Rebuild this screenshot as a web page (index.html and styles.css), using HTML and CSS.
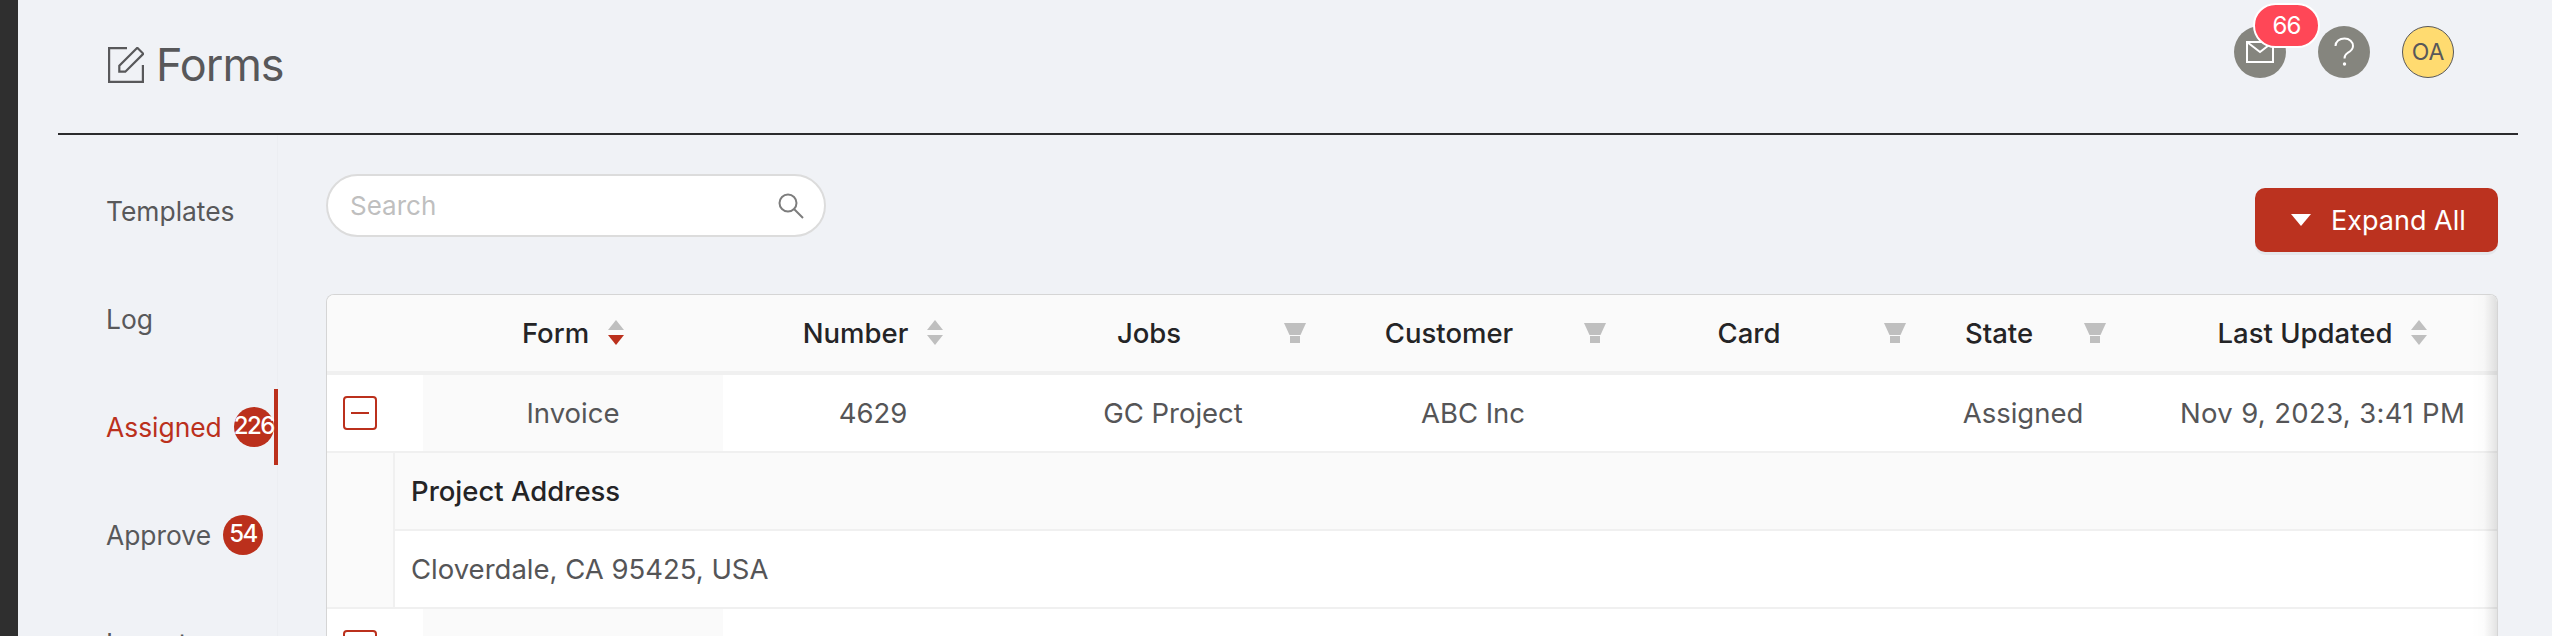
FILE: index.html
```html
<!DOCTYPE html>
<html lang="en">
<head>
<meta charset="utf-8">
<title>Forms</title>
<link rel="stylesheet" href="styles.css">
</head>
<body>
<div class="app">
  <div class="rail"></div>
  <div class="main">
    <header class="topbar">
      <h1 class="title">
        <svg class="title-icon" viewBox="0 0 36 36" width="36" height="36" fill="none" stroke="#58585a" stroke-width="2.2"><path d="M19 1.100H1.100V34.900H34.900V18"/><path d="M11.300 24.700V18.700L29.300 .8L35.300 6.800L17.300 24.700Z"/></svg>
        <span>Forms</span>
      </h1>
      <div class="tools">
        <div class="tool">
          <svg viewBox="0 0 52 52" width="52" height="52" fill="none" stroke="#fff" stroke-width="2"><rect x="13" y="16" width="26" height="20"/><path d="M13 16L26 26L39 16"/></svg>
          <span class="mail-count">66</span>
        </div>
        <div class="tool">
          <svg viewBox="0 0 52 52" width="52" height="52" fill="none" stroke="#fff" stroke-width="2"><path d="M17.500 20C17.500 15.500 21.500 12.500 26.500 12.500C31.500 12.500 35 15.800 35 20C35 24 32 25.600 29.500 27C27.500 28.200 26.500 29.500 26.500 32.500"/><circle cx="26.500" cy="38" r="1.700" fill="#fff" stroke="none"/></svg>
        </div>
        <div class="avatar">OA</div>
      </div>
    </header>
    <div class="body">
      <nav class="nav">
        <a class="nav-item">Templates</a>
        <a class="nav-item">Log</a>
        <a class="nav-item nav-item-active">Assigned <span class="count">226</span></a>
        <a class="nav-item">Approve <span class="count">54</span></a>
        <a class="nav-item">Import</a>
      </nav>
      <section class="content">
        <div class="toolbar">
          <label class="search">
            <input class="search-input" type="text" placeholder="Search">
            <svg viewBox="0 0 26 26" width="26" height="26" fill="none" stroke="#7d7d7d" stroke-width="2"><circle cx="10" cy="10" r="8.500"/><path d="M16 16L25 25"/></svg>
          </label>
          <button class="expand-all"><span class="caret"></span>Expand All</button>
        </div>
        <div class="table">
          <div class="row row-head">
            <div class="cell"></div>
            <div class="cell cell-sorted"><span>Form</span><svg class="sort" viewBox="0 0 16 25" width="16" height="25"><path d="M8 0L16 10H0Z" fill="#bfbfbf"/><path d="M8 25L0 15H16Z" fill="#bb301c"/></svg></div>
            <div class="cell"><span>Number</span><svg class="sort" viewBox="0 0 16 25" width="16" height="25"><path d="M8 0L16 10H0Z" fill="#bfbfbf"/><path d="M8 25L0 15H16Z" fill="#bfbfbf"/></svg></div>
            <div class="cell cell-filter"><span>Jobs</span><svg class="filter" viewBox="0 0 22 20" width="22" height="20"><path d="M0 0H22L16.500 12H5.500Z"/><rect x="6" y="13" width="10" height="7"/></svg></div>
            <div class="cell cell-filter"><span>Customer</span><svg class="filter" viewBox="0 0 22 20" width="22" height="20"><path d="M0 0H22L16.500 12H5.500Z"/><rect x="6" y="13" width="10" height="7"/></svg></div>
            <div class="cell cell-filter"><span>Card</span><svg class="filter" viewBox="0 0 22 20" width="22" height="20"><path d="M0 0H22L16.500 12H5.500Z"/><rect x="6" y="13" width="10" height="7"/></svg></div>
            <div class="cell cell-filter"><span>State</span><svg class="filter" viewBox="0 0 22 20" width="22" height="20"><path d="M0 0H22L16.500 12H5.500Z"/><rect x="6" y="13" width="10" height="7"/></svg></div>
            <div class="cell cell-last"><span>Last Updated</span><svg class="sort" viewBox="0 0 16 25" width="16" height="25"><path d="M8 0L16 10H0Z" fill="#bfbfbf"/><path d="M8 25L0 15H16Z" fill="#bfbfbf"/></svg></div>
          </div>
          <div class="row">
            <div class="cell"><span class="toggle"></span></div>
            <div class="cell cell-sorted">Invoice</div>
            <div class="cell">4629</div>
            <div class="cell">GC Project</div>
            <div class="cell">ABC Inc</div>
            <div class="cell"></div>
            <div class="cell">Assigned</div>
            <div class="cell cell-last cell-date">Nov 9, 2023, 3:41 PM</div>
          </div>
          <div class="detail">
            <div class="detail-gutter"></div>
            <div class="detail-body">
              <div class="detail-head">Project Address</div>
              <div class="detail-value">Cloverdale, CA 95425, USA</div>
            </div>
          </div>
          <div class="row">
            <div class="cell"><span class="toggle"></span></div>
            <div class="cell cell-sorted">Invoice</div>
            <div class="cell"></div>
            <div class="cell"></div>
            <div class="cell"></div>
            <div class="cell"></div>
            <div class="cell"></div>
            <div class="cell cell-last"></div>
          </div>
        </div>
      </section>
    </div>
  </div>
</div>
</body>
</html>
```

FILE: styles.css
```css
* { box-sizing: border-box; }
html, body { margin: 0; height: 636px; overflow: hidden; }
body { background: #f0f2f6; color: #555557; font-family: Inter, "Liberation Sans", sans-serif; font-size: 26.4px; }

.app { display: flex; height: 636px; overflow: hidden; }
.rail { width: 18px; flex: none; background: #2f2f2f; }
.main { flex: 1; min-width: 0; }

.topbar { display: flex; justify-content: space-between; align-items: flex-start; height: 135px; margin: 0 34px 0 40px; border-bottom: 2px solid #2b2b2d; padding: 0 64px 0 50px; }
.title { display: flex; align-items: center; gap: 12px; margin: 40px 0 0; font-size: 45px; font-weight: 400; line-height: 50px; letter-spacing: -1px; color: #58585a; }
.title-icon { flex: none; }
.tools { display: flex; gap: 32px; padding-top: 26px; }
.tool { position: relative; width: 52px; height: 52px; border-radius: 50%; background: #85857e; }
.tool svg { display: block; }
.mail-count { position: absolute; left: 19px; top: -23px; width: 67px; height: 45px; border: 2px solid #fff; border-radius: 23px; background: #ff4757; color: #fff; font-size: 24px; line-height: 41px; letter-spacing: -1px; text-align: center; }
.avatar { width: 52px; height: 52px; border: 1px solid #58585a; border-radius: 50%; background: #ffdb70; color: #58585a; font-size: 23px; line-height: 50px; text-align: center; }

.body { display: flex; }
.nav { width: 260px; flex: none; padding-top: 38px; border-right: 1px solid #eceef2; min-height: 600px; }
.nav-item { display: flex; align-items: center; gap: 12px; height: 76px; margin: 0 -1px 32px 0; padding-left: 88px; color: #58585a; white-space: nowrap; }
.nav-item-active { color: #bb301c; border-right: 4px solid #bb301c; }
.count { width: 40px; height: 40px; flex: none; border-radius: 50%; background: #bb301c; color: #fff; font-size: 24px; font-weight: 500; line-height: 38px; text-align: center; letter-spacing: -1.6px; }

.content { flex: 1; min-width: 0; margin: 0 54px 0 48px; padding-top: 39px; }
.toolbar { display: flex; justify-content: space-between; align-items: flex-start; height: 120px; }
.search { display: flex; align-items: center; width: 500px; height: 63px; padding: 0 20px 0 22px; border: 2px solid #dcdcdc; border-radius: 32px; background: #fff; font-size: 26px; }
.search-input { flex: 1; min-width: 0; border: 0; outline: 0; padding: 0; background: transparent; font: inherit; color: #555557; }
.search-input::placeholder { color: #bfbfbf; opacity: 1; }
.expand-all { display: flex; align-items: center; gap: 20px; width: 243px; height: 64px; margin-top: 14px; padding: 0 0 0 36px; border: 0; border-radius: 10px; background: #bb321f; color: #fff; font: inherit; font-size: 27px; box-shadow: 0 3px 0 rgba(0,0,0,.045); }
.caret { width: 0; height: 0; border-left: 10px solid transparent; border-right: 10px solid transparent; border-top: 12px solid #fff; }

.table { position: relative; border: 1px solid #d5d5d5; border-bottom: 0; border-radius: 8px 8px 0 0; background: #fff; font-size: 27.5px; overflow: hidden; }
.table::after { content: ""; position: absolute; top: 0; right: 0; bottom: 0; width: 26px; background: linear-gradient(to right, rgba(0,0,0,0), rgba(0,0,0,.012) 50%, rgba(0,0,0,.11)); pointer-events: none; }

.row { display: grid; grid-template-columns: 96px 300px 300px 300px 300px 300px 200px 1fr; height: 78px; border-bottom: 2px solid #f0f0f0; }
.row-head { height: 80px; border-bottom-width: 4px; background: #fafafa; color: #242426; font-weight: 500; }
.cell { display: flex; align-items: center; justify-content: center; gap: 19px; min-width: 0; white-space: nowrap; }
.cell-sorted { background: #fafafa; }
.cell-filter { position: relative; padding-right: 48px; }
.cell-last { padding-left: 25px; }
.cell-date { letter-spacing: .35px; }
.sort { flex: none; margin-top: -1px; }
.filter { position: absolute; top: 28px; right: 17px; fill: #bfbfbf; }
.toggle { position: relative; width: 34px; height: 34px; margin-left: -30px; border: 2px solid #bb301c; border-radius: 4px; }
.toggle::after { content: ""; position: absolute; left: 6px; right: 6px; top: 14px; height: 2px; background: #bb301c; }

.detail { display: flex; height: 156px; border-bottom: 2px solid #f0f0f0; }
.detail-gutter { width: 66px; flex: none; background: #fafafa; }
.detail-body { flex: 1; min-width: 0; border-left: 2px solid #f0f0f0; }
.detail-head { display: flex; align-items: center; height: 78px; padding-left: 16px; border-bottom: 2px solid #f0f0f0; background: #fafafa; color: #242426; font-weight: 500; }
.detail-value { display: flex; align-items: center; height: 76px; padding-left: 16px; }
```
